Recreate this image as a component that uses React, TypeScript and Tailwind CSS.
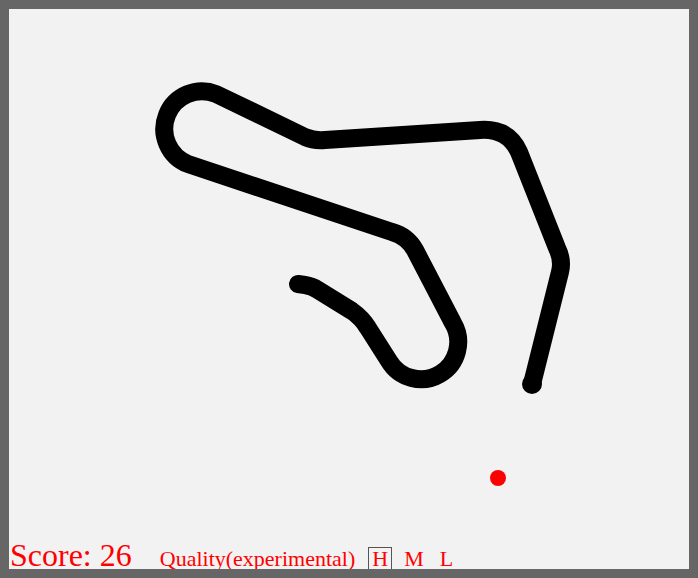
const snakePath =
    "M 298 284 L 305 285 Q 312 286 318 290 L 352 311 Q 362 318 368 328 L 389 361 " +
    "A 33 33 0 0 0 453 323 L 415 250 Q 407 236 392 232 L 188 164 " +
    "A 36 36 0 0 1 216 94 L 305 137 Q 314 141 325 140 L 480 130 Q 508 128 519 152 " +
    "L 557 248 Q 563 260 560 272 L 532 384";

export default function App() {
    return (
        <div className="w-[698px] h-[578px] bg-[#666666] p-[9px]">
            <div className="relative w-[680px] h-[560px] bg-[#f2f2f2] overflow-hidden flex flex-col justify-end">
                <svg
                    className="absolute inset-0"
                    width="680"
                    height="560"
                    viewBox="9 9 680 560"
                >
                    <path
                        d={snakePath}
                        fill="none"
                        stroke="#000"
                        strokeWidth="18"
                        strokeLinecap="round"
                        strokeLinejoin="round"
                    />
                    <circle cx="532" cy="384" r="10" fill="#000" />
                    <circle cx="498" cy="478" r="8" fill="#ff0000" />
                </svg>
                <div
                    className="relative flex items-baseline pl-[1px] -mb-[2px] text-[#ff0000] leading-none"
                    style={{ fontFamily: '"Liberation Serif", serif' }}
                >
                    <span className="text-[32px]">Score: 26</span>
                    <span className="text-[22px] ml-[28px]">Quality(experimental)</span>
                    <div className="flex items-baseline gap-[8px] ml-[13px] text-[22px]">
                        <span className="border border-[#555555] px-[3px]">H</span>
                        <span className="border border-transparent px-[3px]">M</span>
                        <span className="border border-transparent px-[3px]">L</span>
                    </div>
                </div>
            </div>
        </div>
    );
}
